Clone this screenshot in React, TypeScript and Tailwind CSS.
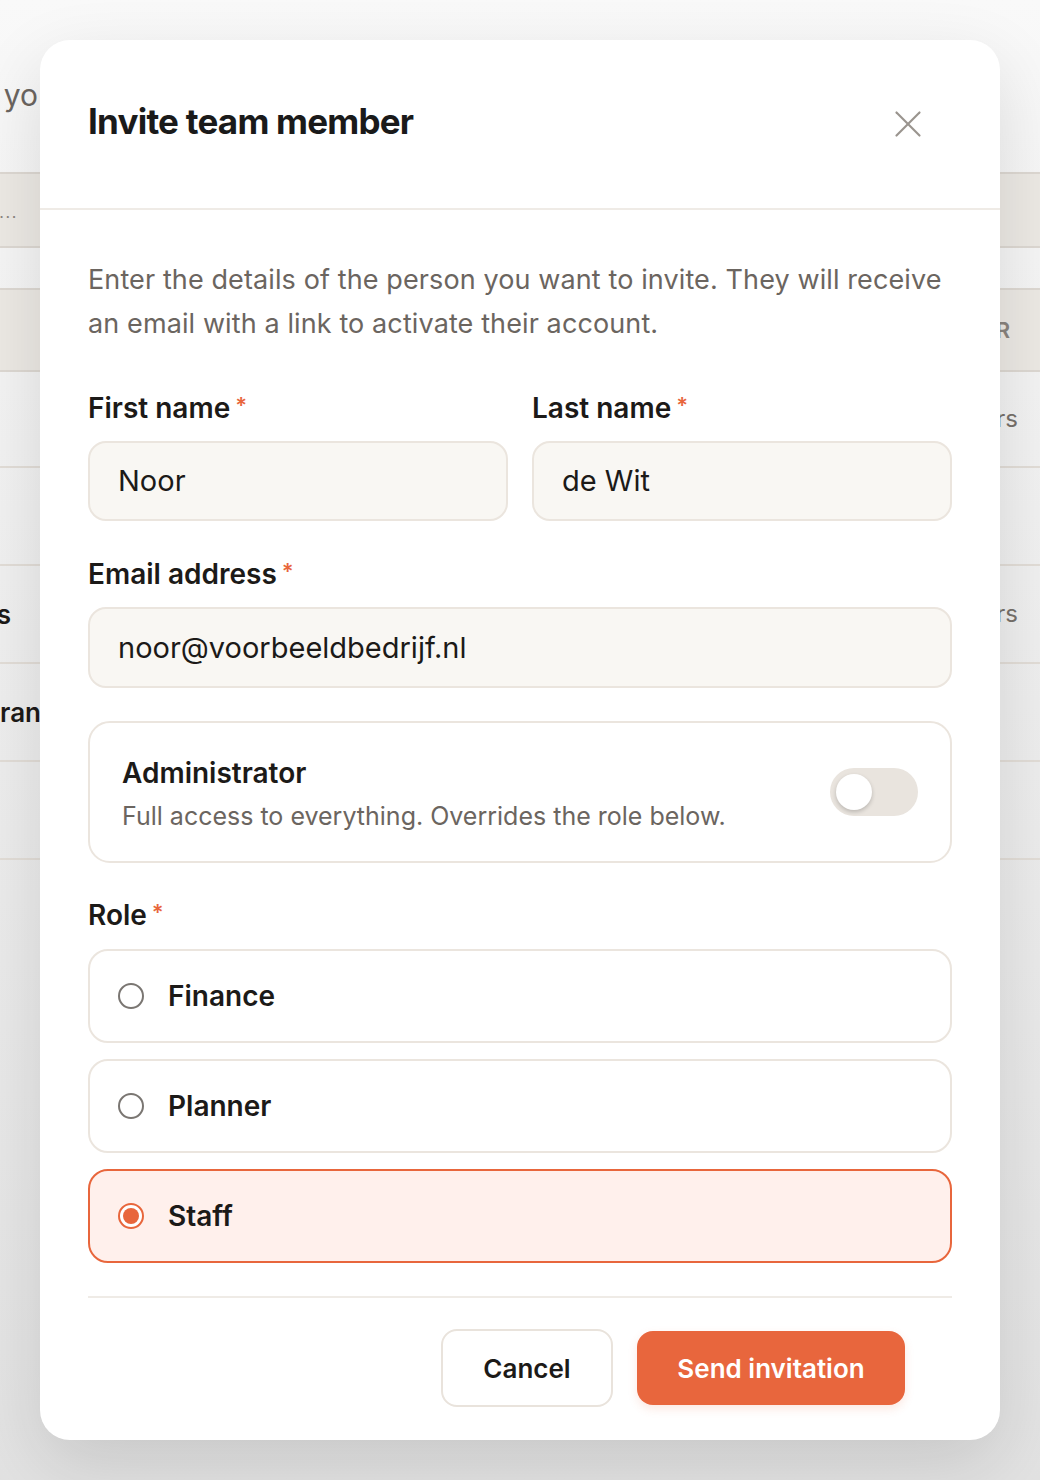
import { X } from "lucide-react";

const font = { fontFamily: "Inter, 'Noto Sans', sans-serif" };

type Row = { left: string; right: string; band?: boolean; h: string; clip: string };

// rows of the members table that sits behind the dialog
const ROWS: Row[] = [
  { left: "", right: "", band: true, h: "h-[84px]", clip: "w-[40px]" },
  { left: "", right: "Planners", h: "h-[96px]", clip: "w-[40px]" },
  { left: "", right: "", h: "h-[98px]", clip: "w-[40px]" },
  { left: "Thomas", right: "Planners", h: "h-[98px]", clip: "w-[11px]" },
  { left: "Kieran", right: "", h: "h-[98px]", clip: "w-[41px]" },
  { left: "", right: "", h: "h-[98px]", clip: "w-[40px]" },
];

function Label({ children }: { children: React.ReactNode }) {
  return (
    <div className="flex items-start text-[28px] font-semibold leading-[36px] text-[#1c1a18]">
      {children}
      <span className="ml-[5px] mt-[2px] text-[22px] leading-[26px] text-[#e8663c]">*</span>
    </div>
  );
}

function TextInput({ value, tall }: { value: string; tall?: boolean }) {
  return (
    <div
      className={
        tall
          ? "flex h-[81px] items-center rounded-[18px] border-2 border-[#ebe5de] bg-[#f9f7f3] px-[28px] text-[29px] text-[#1c1a18]"
          : "flex h-[80px] items-center rounded-[18px] border-2 border-[#ebe5de] bg-[#f9f7f3] px-[28px] text-[29px] text-[#1c1a18]"
      }
    >
      {value}
    </div>
  );
}

function RoleOption({ label, selected }: { label: string; selected?: boolean }) {
  return (
    <div
      className={
        selected
          ? "flex h-[94px] items-center gap-[24px] rounded-[20px] border-2 border-[#e8663c] bg-[#fff0ec] px-[28px]"
          : "flex h-[94px] items-center gap-[24px] rounded-[20px] border-2 border-[#ebe5de] bg-white px-[28px]"
      }
    >
      {selected ? (
        <span className="flex h-[26px] w-[26px] items-center justify-center rounded-full border-2 border-[#e8663c] bg-white">
          <span className="h-[16px] w-[16px] rounded-full bg-[#e8663c]" />
        </span>
      ) : (
        <span className="h-[26px] w-[26px] rounded-full border-2 border-[#7a7672] bg-white" />
      )}
      <span className="text-[28px] font-semibold text-[#1c1a18]">{label}</span>
    </div>
  );
}

export default function App() {
  return (
    <div
      className="relative h-[1480px] w-[1040px] overflow-hidden bg-gradient-to-b from-[#f9f9f9] to-[#e2e2e2]"
      style={font}
    >
      {/* page behind the dialog */}
      <div className="flex flex-col">
        <div className="flex h-[172px] items-center">
          <div className="flex w-[38px] justify-end overflow-hidden whitespace-nowrap pt-[18px] text-[30px] text-[#6b6560]">
            Manage who has access to yo
          </div>
        </div>
        <div className="flex h-[76px] items-center border-y-2 border-[#ddd8d2] bg-[#ece9e4]">
          <div className="flex w-[40px] justify-end overflow-hidden whitespace-nowrap pr-[22px] pt-[4px] text-[16px] tracking-widest text-[#8a847e]">
            Search...
          </div>
        </div>
        <div className="h-[40px]" />
        {ROWS.map((r, i) => (
          <div
            key={i}
            className={
              r.band
                ? `flex ${r.h} items-center justify-between border-y-2 border-[#ddd8d2] bg-[#ece9e4]`
                : `flex ${r.h} items-center justify-between border-b-2 border-[#e2ddd7]`
            }
          >
            <div className={`flex ${r.clip} justify-end overflow-hidden whitespace-nowrap text-[26px] font-semibold text-[#1c1a18]`}>
              {r.left}
            </div>
            {r.band ? (
              <div className="flex w-[48px] justify-end overflow-hidden whitespace-nowrap pr-[30px] text-[22px] font-semibold uppercase text-[#8a847e]">
                Member
              </div>
            ) : (
              <div className="flex w-[48px] justify-end overflow-hidden whitespace-nowrap pr-[22px] text-[24px] text-[#77716b]">
                {r.right}
              </div>
            )}
          </div>
        ))}
      </div>

      {/* invite dialog */}
      <div className="absolute left-[40px] top-[40px] flex h-[1400px] w-[960px] flex-col rounded-[30px] bg-white shadow-[0_24px_70px_rgba(0,0,0,0.12)]">
        <div className="flex h-[170px] items-center justify-between border-b-2 border-[#efebe6] pb-[6px] pl-[48px] pr-[69px]">
          <h2 className="text-[35px] font-bold tracking-[-0.022em] text-[#1a1a1a]">Invite team member</h2>
          <X className="mt-[6px] h-[46px] w-[46px] text-[#9a948e]" strokeWidth={1.15} />
        </div>

        <div className="flex flex-1 flex-col px-[48px] pt-[48px]">
          <p className="text-[27px] leading-[44px] tracking-[0.004em] text-[#6b6560]">
            Enter the details of the person you want to invite. They will receive an email with a link to activate their
            account.
          </p>

          <div className="mt-[44px] grid grid-cols-2 gap-[24px]">
            <div className="flex flex-col gap-[15px]">
              <Label>First name</Label>
              <TextInput value="Noor" />
            </div>
            <div className="flex flex-col gap-[15px]">
              <Label>Last name</Label>
              <TextInput value="de Wit" />
            </div>
          </div>

          <div className="mt-[35px] flex flex-col gap-[15px]">
            <Label>Email address</Label>
            <TextInput value="noor@voorbeeldbedrijf.nl" tall />
          </div>

          <div className="mt-[33px] flex h-[142px] items-center justify-between rounded-[22px] border-2 border-[#ebe5de] pl-[32px] pr-[32px]">
            <div className="flex flex-col gap-[8px] pt-[4px]">
              <span className="text-[28px] font-semibold leading-[36px] text-[#1c1a18]">Administrator</span>
              <span className="text-[25px] leading-[34px] text-[#6b6560]">
                Full access to everything. Overrides the role below.
              </span>
            </div>
            <div className="flex h-[48px] w-[88px] items-center rounded-full bg-[#e9e4de] px-[6px]">
              <span className="h-[36px] w-[36px] rounded-full bg-white shadow-[0_2px_4px_rgba(0,0,0,0.2)]" />
            </div>
          </div>

          <div className="mt-[34px] flex flex-col gap-[16px]">
            <Label>Role</Label>
            <div className="flex flex-col gap-[16px]">
              <RoleOption label="Finance" />
              <RoleOption label="Planner" />
              <RoleOption label="Staff" selected />
            </div>
          </div>

          <div className="mt-[33px] border-t-2 border-[#efebe6]" />

          <div className="mr-[47px] mt-[31px] flex items-center justify-end gap-[24px]">
            <button className="flex h-[78px] w-[172px] items-center justify-center rounded-[16px] border-2 border-[#e9e3dc] bg-white text-[26px] font-semibold text-[#1c1a18]">
              Cancel
            </button>
            <button className="flex h-[74px] w-[268px] items-center justify-center rounded-[16px] bg-[#e8663d] text-[26px] font-semibold text-white shadow-[0_4px_10px_rgba(232,102,61,0.15)]">
              Send invitation
            </button>
          </div>
        </div>
      </div>
    </div>
  );
}
